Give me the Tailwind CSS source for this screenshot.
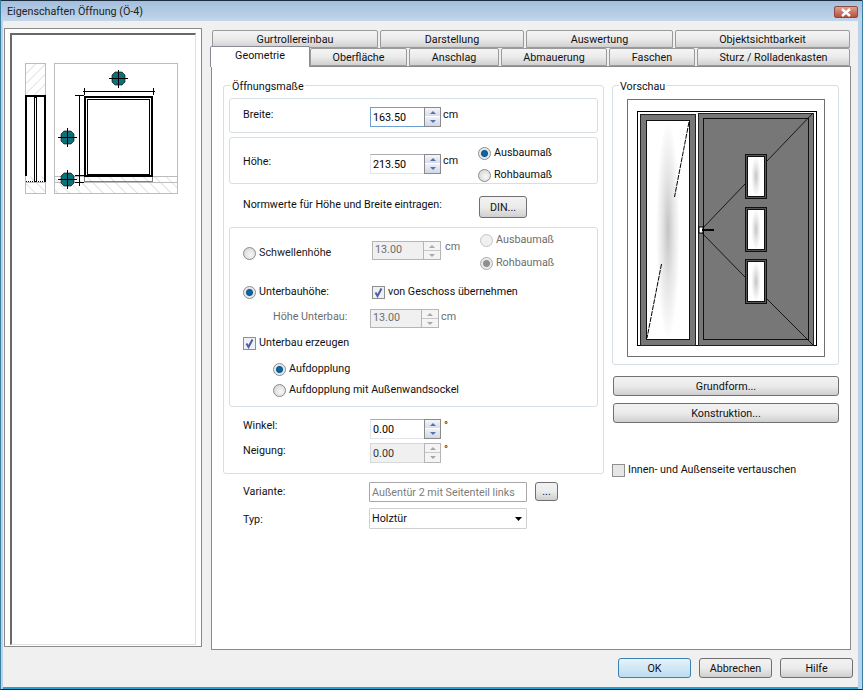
<!DOCTYPE html>
<html lang="de">

<head>
    <meta charset="UTF-8">
    <title>Eigenschaften Öffnung (Ö-4)</title>
    <script src="https://cdn.jsdelivr.net/npm/@tailwindcss/browser@4"></script>
</head>

<body class="w-[863px] h-[690px] overflow-hidden bg-[#f0f0f0] font-['Roboto','Liberation_Sans',sans-serif] text-[10.75px] leading-[16px] text-[#111]">
    <div class="w-[863px] h-[690px] flex flex-col border-x border-b border-x-[#3a7f9f] border-b-[#123] bg-[#bcd2ea]">
        <!-- Title bar -->
        <div class="h-[21px] shrink-0 flex items-center justify-between pl-[6px] pr-[4px] pt-[2px] border-t border-[#1c2c3c] bg-gradient-to-b from-[#a3bedd] to-[#c3d6eb]">
            <span class="text-[#222]">Eigenschaften Öffnung (Ö-4)</span>
            <div class="w-[24px] h-[12px] flex items-center justify-center rounded-[2px] border border-[#8c4a40] bg-gradient-to-b from-[#e0a090] to-[#b4503c]">
                <svg width="12" height="9" viewBox="0 0 12 9"><path d="M2 1 L10 8 M10 1 L2 8" stroke="#fff" stroke-width="2.4"/></svg>
            </div>
        </div>

        <div class="flex-1 ml-[2px] mr-[4px] border-b-2 border-[#1fa3d2] bg-[#f0f0f0] flex flex-col">
            <div class="flex h-[629px] pl-[1px]">
                <!-- Left picture pane -->
                <div class="w-[198px] h-[619px] mt-[7px] border border-[#8a8a8a] bg-white px-[5px] pt-[4px] pb-[1px]">
                    <div class="h-full border-t-2 border-l-2 border-[#696969] border-r border-b border-r-[#e0e0e0] border-b-[#e0e0e0]">
                        <svg class="block ml-[3px] mt-[20px]" width="170" height="145" viewBox="15 55 170 145">
                            <defs>
                                <pattern id="h1" width="7" height="7" patternUnits="userSpaceOnUse" patternTransform="rotate(45)">
                                    <line x1="0" y1="0" x2="0" y2="7" stroke="#c4c4c4" stroke-width="1"/>
                                </pattern>
                                <pattern id="h2" width="8" height="8" patternUnits="userSpaceOnUse" patternTransform="rotate(-45)">
                                    <line x1="0" y1="0" x2="0" y2="8" stroke="#c4c4c4" stroke-width="1"/>
                                </pattern>
                            </defs>
                            <!-- section -->
                            <rect x="25.5" y="63.5" width="20" height="33" fill="url(#h1)"/>
                            <rect x="25.5" y="176.5" width="20" height="17" fill="url(#h2)"/>
                            <rect x="25.5" y="63.5" width="20" height="130" fill="none" stroke="#bcbcbc"/>
                            <line x1="25" y1="182.5" x2="46" y2="182.5" stroke="#bcbcbc"/>
                            <path d="M25 96 H46 M26 96 V176 M45 96 V182" stroke="#000" stroke-width="2" fill="none"/>
                            <rect x="34.5" y="97.5" width="2" height="84" fill="#fff" stroke="#000" stroke-width="1"/>
                            <line x1="26" y1="181.5" x2="45" y2="181.5" stroke="#000" stroke-dasharray="1 1"/>
                            <!-- front view -->
                            <rect x="54.5" y="176.5" width="123" height="17" fill="url(#h2)"/>
                            <rect x="54.5" y="63.5" width="123" height="130" fill="none" stroke="#bcbcbc"/>
                            <path d="M54 176.5 H178 M54 182.5 H178" stroke="#bcbcbc"/>
                            <rect x="85" y="97" width="67" height="79" fill="#fff" stroke="#000" stroke-width="2"/>
                            <rect x="87.5" y="99.5" width="62" height="75" fill="#fff" stroke="#000" stroke-width="1"/>
                            <rect x="84.5" y="176.5" width="68" height="5" fill="none" stroke="#000" stroke-dasharray="1 1"/>
                            <!-- dimensions -->
                            <path d="M83 91.5 H155 M84.5 88 V95 M153.5 88 V95 M79.5 95 V186 M75 95.5 H84 M75 175.5 H84 M75 182.5 H84" stroke="#000" fill="none"/>
                            <!-- handles -->
                            <path d="M115 72 H122 L125 75 V82 L122 85 H115 L112 82 V75 Z" fill="#0d7078" stroke="#000" stroke-width="0.6"/>
                            <path d="M109 78.5 H128 M118.5 70 V88" stroke="#000"/>
                            <path d="M64 131 H71 L74 134 V141 L71 144 H64 L61 141 V134 Z" fill="#0d7078" stroke="#000" stroke-width="0.6"/>
                            <path d="M58 137.5 H77 M67.5 128 V147" stroke="#000"/>
                            <path d="M64 173 H71 L74 176 V183 L71 186 H64 L61 183 V176 Z" fill="#0d7078" stroke="#000" stroke-width="0.6"/>
                            <path d="M58 179.5 H77 M67.5 170 V189" stroke="#000"/>
                        </svg>
                    </div>
                </div>

                <!-- Tabs -->
                <div class="ml-[9px] w-[641px] flex flex-col pt-[9px]">
                    <div class="flex h-[17px] pl-[1px] gap-[2px] text-center">
                        <div class="w-[166px] h-[18px] pt-[1px] border border-[#9a9a9a] rounded-t-[2px] bg-gradient-to-b from-[#f4f4f4] via-[#ebebeb] to-[#d0d0d0]">Gurtrollereinbau</div>
                        <div class="w-[144px] h-[18px] pt-[1px] border border-[#9a9a9a] rounded-t-[2px] bg-gradient-to-b from-[#f4f4f4] via-[#ebebeb] to-[#d0d0d0]">Darstellung</div>
                        <div class="w-[147px] h-[18px] pt-[1px] border border-[#9a9a9a] rounded-t-[2px] bg-gradient-to-b from-[#f4f4f4] via-[#ebebeb] to-[#d0d0d0]">Auswertung</div>
                        <div class="w-[175px] h-[18px] pt-[1px] border border-[#9a9a9a] rounded-t-[2px] bg-gradient-to-b from-[#f4f4f4] via-[#ebebeb] to-[#d0d0d0]">Objektsichtbarkeit</div>
                    </div>
                    <div class="flex h-[19px] gap-[2px] text-center items-end">
                        <div class="relative z-10 w-[100px] h-[21px] -ml-[1px] -mr-[2px] pt-[1px] border border-b-0 border-[#898c95] rounded-t-[2px] bg-white -mb-[1px]">Geometrie</div>
                        <div class="w-[97px] h-[18px] border border-[#9a9a9a] rounded-t-[2px] bg-gradient-to-b from-[#f4f4f4] via-[#ebebeb] to-[#d0d0d0] pt-[1px]">Oberfläche</div>
                        <div class="w-[90px] h-[18px] border border-[#9a9a9a] rounded-t-[2px] bg-gradient-to-b from-[#f4f4f4] via-[#ebebeb] to-[#d0d0d0] pt-[1px]">Anschlag</div>
                        <div class="w-[106px] h-[18px] border border-[#9a9a9a] rounded-t-[2px] bg-gradient-to-b from-[#f4f4f4] via-[#ebebeb] to-[#d0d0d0] pt-[1px]">Abmauerung</div>
                        <div class="w-[86px] h-[18px] border border-[#9a9a9a] rounded-t-[2px] bg-gradient-to-b from-[#f4f4f4] via-[#ebebeb] to-[#d0d0d0] pt-[1px]">Faschen</div>
                        <div class="w-[153px] h-[18px] border border-[#9a9a9a] rounded-t-[2px] bg-gradient-to-b from-[#f4f4f4] via-[#ebebeb] to-[#d0d0d0] pt-[1px]">Sturz / Rolladenkasten</div>
                    </div>

                    <!-- Tab panel -->
                    <div class="h-[584px] w-[640px] border border-[#8a8a8a] bg-white flex pl-[11px] pt-[18px]">
                        <!-- Left column -->
                        <div class="w-[381px]">
                            <div class="h-[389px] border border-[#d5dfe5] rounded-[3px] px-[5px]">
                                <div class="-mt-[7px] ml-[2px] w-fit bg-white px-[1px]">Öffnungsmaße</div>

                                <!-- Breite -->
                                <div class="mt-[3px] h-[35px] border border-[#d5dfe5] rounded-[3px] flex pl-[13px]">
                                    <div class="w-[127px] pt-[8px]">Breite:</div>
                                    <div class="mt-[8px] w-[71px] h-[20px] flex border border-[#6e9fd0] bg-white">
                                        <div class="w-[53px] pl-[2px] pt-[2px] text-[#000]">163.50</div>
                                        <div class="w-[17px] flex flex-col -my-[1px] -mr-[1px] border border-[#8a8a8a] bg-[#e8ebf2]">
                                            <div class="h-[9px] flex items-center justify-center border-b border-white bg-gradient-to-b from-[#f4f6fa] to-[#d6dcec]"><svg width="6" height="3" viewBox="0 0 7 4" preserveAspectRatio="none"><path d="M3.5 0 L7 4 H0 Z" fill="#5a70a8"/></svg></div>
                                            <div class="flex-1 flex items-center justify-center bg-gradient-to-b from-[#eef1f7] to-[#d0d7e8]"><svg width="6" height="3" viewBox="0 0 7 4" preserveAspectRatio="none"><path d="M0 0 H7 L3.5 4 Z" fill="#5a70a8"/></svg></div>
                                        </div>
                                    </div>
                                    <div class="ml-[2px] pt-[8px]">cm</div>
                                </div>

                                <!-- Höhe -->
                                <div class="mt-[4px] h-[47px] border border-[#d5dfe5] rounded-[3px] flex pl-[13px]">
                                    <div class="w-[127px] pt-[16px]">Höhe:</div>
                                    <div class="mt-[16px] w-[71px] h-[20px] flex border border-[#e2e6ea] border-t-[#abadb3] bg-white">
                                        <div class="w-[53px] pl-[2px] pt-[2px] text-[#000]">213.50</div>
                                        <div class="w-[17px] flex flex-col -my-[1px] -mr-[1px] border border-[#8a8a8a] bg-[#e8ebf2]">
                                            <div class="h-[9px] flex items-center justify-center border-b border-white bg-gradient-to-b from-[#f4f6fa] to-[#d6dcec]"><svg width="6" height="3" viewBox="0 0 7 4" preserveAspectRatio="none"><path d="M3.5 0 L7 4 H0 Z" fill="#5a70a8"/></svg></div>
                                            <div class="flex-1 flex items-center justify-center bg-gradient-to-b from-[#eef1f7] to-[#d0d7e8]"><svg width="6" height="3" viewBox="0 0 7 4" preserveAspectRatio="none"><path d="M0 0 H7 L3.5 4 Z" fill="#5a70a8"/></svg></div>
                                        </div>
                                    </div>
                                    <div class="ml-[2px] pt-[15px] w-[35px]">cm</div>
                                    <div class="pt-[8px] flex flex-col gap-[8px]">
                                        <div class="flex items-center gap-[3px] h-[14px]"><span class="w-[13px] h-[13px] rounded-full border border-[#8a8a8a] bg-[radial-gradient(circle,#0f6fa8_0,#0a5a92_3px,#dfe3e6_4px,#f5f5f5_6px)]"></span>Ausbaumaß</div>
                                        <div class="flex items-center gap-[3px] h-[14px]"><span class="w-[13px] h-[13px] rounded-full border border-[#8a8a8a] bg-[radial-gradient(circle_at_60%_60%,#f8f8f8,#cfcfcf)]"></span>Rohbaumaß</div>
                                    </div>
                                </div>

                                <!-- Normwerte -->
                                <div class="mt-[12px] h-[22px] flex pl-[14px]">
                                    <div class="w-[236px] pt-[1px]">Normwerte für Höhe und Breite eintragen:</div>
                                    <div class="w-[48px] h-[22px] pt-[1px] flex items-center justify-center border border-[#707070] rounded-[3px] bg-gradient-to-b from-[#f2f2f2] via-[#ebebeb] to-[#cfcfcf]">DIN...</div>
                                </div>

                                <!-- Schwelle / Unterbau -->
                                <div class="mt-[9px] h-[180px] border border-[#d5dfe5] rounded-[3px] pl-[13px]">
                                    <div class="h-[44px] flex">
                                        <div class="w-[129px] pt-[18px] flex gap-[3px] h-[32px] items-center text-[#222]"><span class="w-[13px] h-[13px] rounded-full border border-[#8a8a8a] bg-[radial-gradient(circle_at_60%_60%,#f8f8f8,#cfcfcf)]"></span>Schwellenhöhe</div>
                                        <div class="mt-[13px] w-[69px] h-[19px] flex border border-[#b5b5b5] bg-[#f0f0f0]">
                                            <div class="w-[52px] pl-[2px] text-[#6d6d6d]">13.00</div>
                                            <div class="w-[17px] flex flex-col border-l border-[#b5b5b5] bg-[#f4f4f4]">
                                                <div class="h-[9px] flex items-center justify-center border-b border-[#c8c8c8]"><svg width="6" height="3" viewBox="0 0 7 4" preserveAspectRatio="none"><path d="M3.5 0 L7 4 H0 Z" fill="#a8a8a8"/></svg></div>
                                                <div class="flex-1 flex items-center justify-center"><svg width="6" height="3" viewBox="0 0 7 4" preserveAspectRatio="none"><path d="M0 0 H7 L3.5 4 Z" fill="#a8a8a8"/></svg></div>
                                            </div>
                                        </div>
                                        <div class="ml-[4px] pt-[11px] w-[35px] text-[#6d6d6d]">cm</div>
                                        <div class="pt-[5px] flex flex-col gap-[9px] text-[#6d6d6d]">
                                            <div class="flex items-center gap-[3px] h-[14px]"><span class="w-[13px] h-[13px] rounded-full border border-[#c4c4c4] bg-[#f0f0f0]"></span>Ausbaumaß</div>
                                            <div class="flex items-center gap-[3px] h-[14px]"><span class="w-[13px] h-[13px] rounded-full border border-[#aaa] bg-[radial-gradient(circle,#8f8f8f_0,#8f8f8f_3px,#e8e8e8_4px,#f0f0f0_6px)]"></span>Rohbaumaß</div>
                                        </div>
                                    </div>
                                    <div class="mt-[13px] h-[14px] flex items-center">
                                        <div class="w-[129px] flex gap-[3px] items-center"><span class="w-[13px] h-[13px] rounded-full border border-[#8a8a8a] bg-[radial-gradient(circle,#0f6fa8_0,#0a5a92_3px,#dfe3e6_4px,#f5f5f5_6px)]"></span>Unterbauhöhe:</div>
                                        <div class="flex gap-[3px] items-center"><span class="w-[13px] h-[13px] flex items-center justify-center border border-[#8e8f8f] bg-[#eef0f4]"><svg width="11" height="11" viewBox="0 0 11 11"><path d="M2.5 5.5 L4.5 9 L8.5 1.5" fill="none" stroke="#4a5fa8" stroke-width="2"/></svg></span>von Geschoss übernehmen</div>
                                    </div>
                                    <div class="mt-[10px] h-[19px] flex items-center pl-[30px]">
                                        <div class="w-[97px] pb-[4px] text-[#6d6d6d]">Höhe Unterbau:</div>
                                        <div class="w-[69px] h-[19px] flex border border-[#b5b5b5] bg-[#f0f0f0]">
                                            <div class="w-[52px] pl-[2px] text-[#6d6d6d]">13.00</div>
                                            <div class="w-[17px] flex flex-col border-l border-[#b5b5b5] bg-[#f4f4f4]">
                                                <div class="h-[9px] flex items-center justify-center border-b border-[#c8c8c8]"><svg width="6" height="3" viewBox="0 0 7 4" preserveAspectRatio="none"><path d="M3.5 0 L7 4 H0 Z" fill="#a8a8a8"/></svg></div>
                                                <div class="flex-1 flex items-center justify-center"><svg width="6" height="3" viewBox="0 0 7 4" preserveAspectRatio="none"><path d="M0 0 H7 L3.5 4 Z" fill="#a8a8a8"/></svg></div>
                                            </div>
                                        </div>
                                        <div class="ml-[2px] pb-[4px] text-[#6d6d6d]">cm</div>
                                    </div>
                                    <div class="mt-[8px] h-[14px] flex gap-[3px] items-center"><span class="w-[13px] h-[13px] flex items-center justify-center border border-[#8e8f8f] bg-[#eef0f4]"><svg width="11" height="11" viewBox="0 0 11 11"><path d="M2.5 5.5 L4.5 9 L8.5 1.5" fill="none" stroke="#4a5fa8" stroke-width="2"/></svg></span>Unterbau erzeugen</div>
                                    <div class="mt-[12px] ml-[30px] h-[14px] flex gap-[3px] items-center"><span class="w-[13px] h-[13px] rounded-full border border-[#8a8a8a] bg-[radial-gradient(circle,#0f6fa8_0,#0a5a92_3px,#dfe3e6_4px,#f5f5f5_6px)]"></span>Aufdopplung</div>
                                    <div class="mt-[7px] ml-[30px] h-[14px] flex gap-[3px] items-center"><span class="w-[13px] h-[13px] rounded-full border border-[#8a8a8a] bg-[radial-gradient(circle_at_60%_60%,#f8f8f8,#cfcfcf)]"></span>Aufdopplung mit Außenwandsockel</div>
                                </div>

                                <!-- Winkel / Neigung -->
                                <div class="mt-[12px] h-[20px] flex pl-[14px]">
                                    <div class="w-[127px] -mt-[1px]">Winkel:</div>
                                    <div class="w-[71px] h-[20px] flex border border-[#e2e6ea] border-t-[#abadb3] bg-white">
                                        <div class="w-[53px] pl-[2px] pt-[2px] text-[#000]">0.00</div>
                                        <div class="w-[17px] flex flex-col -my-[1px] -mr-[1px] border border-[#8a8a8a] bg-[#e8ebf2]">
                                            <div class="h-[9px] flex items-center justify-center border-b border-white bg-gradient-to-b from-[#f4f6fa] to-[#d6dcec]"><svg width="6" height="3" viewBox="0 0 7 4" preserveAspectRatio="none"><path d="M3.5 0 L7 4 H0 Z" fill="#5a70a8"/></svg></div>
                                            <div class="flex-1 flex items-center justify-center bg-gradient-to-b from-[#eef1f7] to-[#d0d7e8]"><svg width="6" height="3" viewBox="0 0 7 4" preserveAspectRatio="none"><path d="M0 0 H7 L3.5 4 Z" fill="#5a70a8"/></svg></div>
                                        </div>
                                    </div>
                                    <div class="ml-[3px] -mt-[1px]">°</div>
                                </div>
                                <div class="mt-[4px] h-[20px] flex pl-[14px]">
                                    <div class="w-[127px]">Neigung:</div>
                                    <div class="w-[71px] h-[20px] flex border border-[#d8d8d8] bg-[#f0f0f0]">
                                        <div class="w-[53px] pl-[2px] pt-[2px] text-[#333]">0.00</div>
                                        <div class="w-[17px] flex flex-col -my-[1px] -mr-[1px] border border-[#b5b5b5] bg-[#f4f4f4]">
                                            <div class="h-[9px] flex items-center justify-center border-b border-[#c8c8c8]"><svg width="6" height="3" viewBox="0 0 7 4" preserveAspectRatio="none"><path d="M3.5 0 L7 4 H0 Z" fill="#a8a8a8"/></svg></div>
                                            <div class="flex-1 flex items-center justify-center"><svg width="6" height="3" viewBox="0 0 7 4" preserveAspectRatio="none"><path d="M0 0 H7 L3.5 4 Z" fill="#a8a8a8"/></svg></div>
                                        </div>
                                    </div>
                                    <div class="ml-[3px] -mt-[1px]">°</div>
                                </div>
                            </div>

                            <!-- Variante / Typ -->
                            <div class="mt-[8px] h-[20px] flex pl-[20px]">
                                <div class="w-[126px] pt-[2px]">Variante:</div>
                                <div class="w-[158px] h-[20px] pl-[2px] pt-[2px] whitespace-nowrap border border-[#a8a8a8] rounded-[1px] text-[#7d7d7d]">Außentür 2 mit Seitenteil links</div>
                                <div class="ml-[8px] w-[23px] h-[19px] flex items-center justify-center border border-[#707070] rounded-[3px] bg-gradient-to-b from-[#f2f2f2] via-[#ebebeb] to-[#cfcfcf]">...</div>
                            </div>
                            <div class="mt-[6px] h-[21px] flex pl-[20px]">
                                <div class="w-[126px] pt-[4px]">Typ:</div>
                                <div class="w-[158px] h-[21px] flex items-center justify-between pl-[2px] pr-[4px] border border-[#d0d0d0] rounded-[1px]">
                                    <span>Holztür</span>
                                    <svg width="7" height="4" viewBox="0 0 9 5" preserveAspectRatio="none"><path d="M0 0 H9 L4.5 5 Z" fill="#000"/></svg>
                                </div>
                            </div>
                        </div>

                        <!-- Right column -->
                        <div class="ml-[8px] w-[227px]">
                            <div class="h-[280px] border border-[#d5dfe5] rounded-[3px] pl-[14px]">
                                <div class="-mt-[7px] -ml-[8px] w-fit bg-white px-[1px]">Vorschau</div>
                                <div class="mt-[4px] w-[198px] h-[258px] border border-[#707070] bg-white">
                                    <svg class="block" width="196" height="256" viewBox="628 100 196 256">
                                        <defs>
                                            <radialGradient id="g1" cx="50%" cy="50%" r="50%" gradientTransform="translate(0.5 0.5) scale(0.55 1) translate(-0.5 -0.5)">
                                                <stop offset="0%" stop-color="#c4c4c4"/>
                                                <stop offset="50%" stop-color="#e6e6e6"/>
                                                <stop offset="100%" stop-color="#fff"/>
                                            </radialGradient>
                                        </defs>
                                        <rect x="637.5" y="111.5" width="179" height="234" fill="#fff" stroke="#000"/>
                                        <!-- Seitenteil -->
                                        <rect x="640.5" y="114.5" width="55" height="231" fill="#777" stroke="#222"/>
                                        <rect x="646.5" y="120.5" width="43" height="219" fill="url(#g1)" stroke="#111"/>
                                        <path d="M689 122 L674.5 197 M661.5 264 L647 338" stroke="#000" fill="none" stroke-dasharray="5 1"/>
                                        <!-- Tuerfluegel -->
                                        <rect x="698.5" y="113.5" width="115" height="232" fill="#777" stroke="#222"/>
                                        <rect x="703.5" y="118.5" width="105" height="221" fill="none" stroke="#111"/>
                                        <path d="M813 113 L767 161 M745 184 L702 229 M702 233 L745 277 M767 299 L813 345" stroke="#000" fill="none" stroke-width="0.8"/>
                                        <rect x="745.5" y="154.5" width="21" height="44" fill="#555" stroke="#111"/>
                                        <rect x="747.5" y="156.5" width="17" height="40" fill="url(#g1)" stroke="#111"/>
                                        <rect x="745.5" y="207.5" width="21" height="44" fill="#555" stroke="#111"/>
                                        <rect x="747.5" y="209.5" width="17" height="40" fill="url(#g1)" stroke="#111"/>
                                        <rect x="745.5" y="259.5" width="21" height="44" fill="#555" stroke="#111"/>
                                        <rect x="747.5" y="261.5" width="17" height="40" fill="url(#g1)" stroke="#111"/>
                                        <rect x="699" y="227" width="4" height="6" fill="#fff" stroke="#000"/>
                                        <path d="M702 230 H714" stroke="#000" stroke-width="2"/>
                                    </svg>
                                </div>
                            </div>
                            <div class="mt-[11px] ml-[1px] w-[226px] h-[20px] pt-[1px] flex items-center justify-center border border-[#707070] rounded-[3px] bg-gradient-to-b from-[#f2f2f2] via-[#ebebeb] to-[#cfcfcf]">Grundform...</div>
                            <div class="mt-[7px] ml-[1px] w-[226px] h-[20px] pt-[1px] flex items-center justify-center border border-[#707070] rounded-[3px] bg-gradient-to-b from-[#f2f2f2] via-[#ebebeb] to-[#cfcfcf]">Konstruktion...</div>
                            <div class="mt-[40px] flex items-center gap-[3px] h-[14px]"><span class="w-[13px] h-[13px] border border-[#8e8f8f] bg-[#e6e6e6]"></span>Innen- und Außenseite vertauschen</div>
                        </div>
                    </div>
                </div>
            </div>

            <!-- Dialog buttons -->
            <div class="flex justify-end gap-[8px] pr-[5px] pt-[8px]">
                <div class="w-[73px] h-[20px] pt-[1px] flex items-center justify-center border border-[#3c7fb1] rounded-[3px] bg-gradient-to-b from-[#e6f3fb] to-[#bcdcf0]">OK</div>
                <div class="w-[73px] h-[20px] pt-[1px] flex items-center justify-center border border-[#707070] rounded-[3px] bg-gradient-to-b from-[#f2f2f2] via-[#ebebeb] to-[#cfcfcf]">Abbrechen</div>
                <div class="w-[73px] h-[20px] pt-[1px] flex items-center justify-center border border-[#707070] rounded-[3px] bg-gradient-to-b from-[#f2f2f2] via-[#ebebeb] to-[#cfcfcf]">Hilfe</div>
            </div>
        </div>
    </div>
</body>

</html>
